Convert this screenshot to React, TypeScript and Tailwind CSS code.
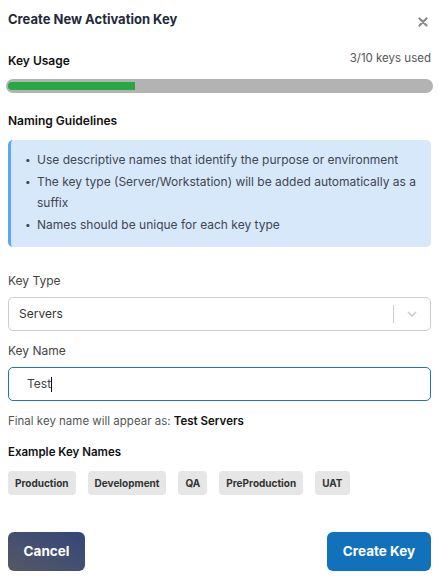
import React from "react";

export default function App() {
  const chips = ["Production", "Development", "QA", "PreProduction", "UAT"];
  return (
    <div className="w-[439px] h-[581px] bg-white text-[#212529] relative" style={{ fontFamily: "Inter, 'Open Sans', sans-serif" }}>
      <div className="flex items-start justify-between pl-[8px] pr-[11px] pt-[10px]">
        <h2 className="text-[13px] font-bold text-[#1f2a3d] leading-[18px]">Create New Activation Key</h2>
        <svg width="10" height="10" viewBox="0 0 10 10" className="mt-[7px]">
          <path d="M1.5 1.5 L8.5 8.5 M8.5 1.5 L1.5 8.5" stroke="#8a8a8a" strokeWidth="2.2" strokeLinecap="round" />
        </svg>
      </div>

      <div className="px-[8px] pt-[22px]">
        <div className="flex items-end justify-between">
          <span className="text-[12px] font-semibold leading-[16px] text-[#111]">Key Usage</span>
          <span className="text-[11.5px] text-[#555] leading-[16px] mr-[0px] pb-[3px]">3/10 keys used</span>
        </div>
        <div className="mt-[10px] -mx-[2px] h-[14px] rounded-full bg-[#b3b3b3] p-[3px] pl-[2px]">
          <div className="h-full w-[30%] bg-[#28a745] rounded-l-full" />
        </div>

        <div className="mt-[20px] text-[12px] font-semibold leading-[16px] text-[#111]">Naming Guidelines</div>

        <div className="mt-[11px] rounded-[5px] bg-[#d8e8fb] border-l-[3px] border-[#5aa6f7] pt-[9px] pb-[12px] pl-[14px] pr-[8px]">
          <ul className="text-[12px] leading-[21.5px] text-[#3e4652]">
            <li className="flex"><span className="w-[12px] shrink-0 text-[10px]">•</span><span>Use descriptive names that identify the purpose or environment</span></li>
            <li className="flex"><span className="w-[12px] shrink-0 text-[10px]">•</span><span>The key type (Server/Workstation) will be added automatically as a suffix</span></li>
            <li className="flex"><span className="w-[12px] shrink-0 text-[10px]">•</span><span>Names should be unique for each key type</span></li>
          </ul>
        </div>

        <div className="mt-[26px] text-[12px] leading-[16px] text-[#444]">Key Type</div>
        <div className="mt-[8px] h-[34px] rounded-[5px] border border-[#cccccc] flex items-center">
          <span className="flex-1 pl-[10px] text-[12px] text-[#333]">Servers</span>
          <span className="w-px h-[18px] bg-[#cccccc]" />
          <span className="w-[36px] flex justify-center">
            <svg width="12" height="8" viewBox="0 0 12 8"><path d="M2 2 L6 6 L10 2" fill="none" stroke="#cccccc" strokeWidth="1.6" /></svg>
          </span>
        </div>

        <div className="mt-[12px] text-[12px] leading-[16px] text-[#444]">Key Name</div>
        <div className="mt-[8px] h-[34px] rounded-[5px] border border-[#1f73bf] flex items-center pl-[18px]">
          <span className="text-[12px] text-[#444]">Test</span>
          <span className="w-px h-[15px] bg-[#111]" />
        </div>

        <div className="mt-[12px] text-[11.5px] leading-[16px] text-[#555]">
          Final key name will appear as: <span className="font-semibold text-[#111]">Test Servers</span>
        </div>

        <div className="mt-[15px] text-[11.5px] font-semibold leading-[16px] text-[#111]">Example Key Names</div>

        <div className="mt-[11px] flex gap-[12px]">
          {chips.map((c) => (
            <span key={c} className="h-[24px] px-[7px] flex items-center rounded-[4px] bg-[#e6e6e6] text-[10px] font-bold text-[#333]">{c}</span>
          ))}
        </div>

        <div className="mt-[37px] flex justify-between">
          <button className="h-[39px] w-[77px] rounded-[6px] text-white text-[13.5px] font-bold bg-gradient-to-tr from-[#555865] to-[#34467a]">Cancel</button>
          <button className="h-[39px] w-[104px] rounded-[6px] text-white text-[13.5px] font-bold bg-[#1171bb]">Create Key</button>
        </div>
      </div>
    </div>
  );
}
